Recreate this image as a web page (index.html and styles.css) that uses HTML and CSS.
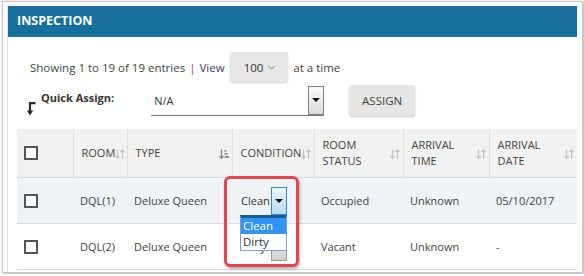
FILE: index.html
```html
<!DOCTYPE html>
<html lang="en">
<head>
    <meta charset="UTF-8">
    <title>Inspection</title>
    <link rel="stylesheet" href="styles.css">
</head>
<body>
    <div class="shot">
        <div class="panel">
            <div class="panel-head">INSPECTION</div>
            <div class="panel-body">
                <div class="paging">
                    <span>Showing 1 to 19 of 19 entries</span>
                    <span class="sep">|</span>
                    <span class="view">View</span>
                    <span class="per-page">100
                        <svg width="7" height="5" viewBox="0 0 7 5"><polyline points="0.5,1 3.5,4 6.5,1" fill="none" stroke="#777" stroke-width="1"/></svg>
                    </span>
                    <span>at a time</span>
                </div>
                <div class="assign">
                    <svg class="assign-arrow" width="9" height="14" viewBox="0 0 9 14">
                        <path d="M8.5 1.2 H3 V9" fill="none" stroke="#2b2b2b" stroke-width="2.2"/>
                        <polygon points="-0.2,8.5 6.2,8.5 3,13.5" fill="#2b2b2b"/>
                    </svg>
                    <span class="assign-label">Quick Assign:</span>
                    <div class="qa-select">
                        <span class="qa-value">N/A</span>
                        <span class="qa-btn"><span class="tri"></span></span>
                    </div>
                    <button class="btn">ASSIGN</button>
                </div>

                <table class="grid">
                    <colgroup>
                        <col style="width:56px"><col style="width:54px"><col style="width:105px"><col style="width:82px">
                        <col style="width:89px"><col style="width:86px"><col style="width:88px">
                    </colgroup>
                    <thead>
                        <tr>
                            <th class="chk-cell"><span class="chk"></span></th>
                            <th><div class="th-in"><span>ROOM</span><svg class="sort" width="10" height="10" viewBox="0 0 10 10"><path d="M2.5 0.5 V9 M0.5 7 L2.5 9.2 L4.5 7 M7.5 9.5 V1 M5.5 3 L7.5 0.8 L9.5 3" fill="none" stroke="#c4c4c4" stroke-width="1.2"/></svg></div></th>
                            <th><div class="th-in"><span>TYPE</span><svg class="sort" width="10" height="10" viewBox="0 0 10 10"><path d="M2.5 0.5 V9 M0.5 7 L2.5 9.2 L4.5 7" fill="none" stroke="#888" stroke-width="1.4"/><rect x="5.5" y="1" width="2" height="1.6" fill="#888"/><rect x="5.5" y="4" width="3" height="1.6" fill="#888"/><rect x="5.5" y="7" width="4.5" height="1.8" fill="#888"/></svg></div></th>
                            <th><div class="th-in"><span>CONDITION</span><svg class="sort" width="10" height="10" viewBox="0 0 10 10"><path d="M2.5 0.5 V9 M0.5 7 L2.5 9.2 L4.5 7 M7.5 9.5 V1 M5.5 3 L7.5 0.8 L9.5 3" fill="none" stroke="#c4c4c4" stroke-width="1.2"/></svg></div></th>
                            <th><div class="th-in"><span>ROOM<br>STATUS</span><svg class="sort" width="10" height="10" viewBox="0 0 10 10"><path d="M2.5 0.5 V9 M0.5 7 L2.5 9.2 L4.5 7 M7.5 9.5 V1 M5.5 3 L7.5 0.8 L9.5 3" fill="none" stroke="#c4c4c4" stroke-width="1.2"/></svg></div></th>
                            <th><div class="th-in"><span>ARRIVAL<br>TIME</span><svg class="sort" width="10" height="10" viewBox="0 0 10 10"><path d="M2.5 0.5 V9 M0.5 7 L2.5 9.2 L4.5 7 M7.5 9.5 V1 M5.5 3 L7.5 0.8 L9.5 3" fill="none" stroke="#c4c4c4" stroke-width="1.2"/></svg></div></th>
                            <th><div class="th-in"><span>ARRIVAL<br>DATE</span><svg class="sort" width="10" height="10" viewBox="0 0 10 10"><path d="M2.5 0.5 V9 M0.5 7 L2.5 9.2 L4.5 7 M7.5 9.5 V1 M5.5 3 L7.5 0.8 L9.5 3" fill="none" stroke="#c4c4c4" stroke-width="1.2"/></svg></div></th>
                        </tr>
                    </thead>
                    <tbody>
                        <tr class="row-hi">
                            <td class="chk-cell"><span class="chk"></span></td>
                            <td>DQL(1)</td>
                            <td>Deluxe Queen</td>
                            <td>
                                <div class="cond-select open">
                                    <span class="cond-value">Clean</span>
                                    <span class="cond-btn"><span class="tri"></span></span>
                                    <ul class="cond-list">
                                        <li class="picked">Clean</li>
                                        <li>Dirty</li>
                                    </ul>
                                </div>
                            </td>
                            <td>Occupied</td>
                            <td>Unknown</td>
                            <td>05/10/2017</td>
                        </tr>
                        <tr>
                            <td class="chk-cell"><span class="chk"></span></td>
                            <td>DQL(2)</td>
                            <td>Deluxe Queen</td>
                            <td>
                                <div class="cond-select">
                                    <span class="cond-value">Dirty</span>
                                    <span class="cond-btn"><span class="tri"></span></span>
                                </div>
                            </td>
                            <td>Vacant</td>
                            <td>Unknown</td>
                            <td>-</td>
                        </tr>
                    </tbody>
                </table>
            </div>
        </div>
        <div class="callout"></div>
    </div>
</body>
</html>
```

FILE: styles.css
```css
body {
    margin: 0;
    background: #fff;
    font-family: "Open Sans", "Liberation Sans", sans-serif;
    color: #444;
}

.shot {
    position: relative;
    margin: 1px 2px;
    width: 579px;
    height: 270px;
    border: 1px solid #c9c9c9;
    box-shadow: 1px 1px 3px rgba(0, 0, 0, 0.35);
    overflow: hidden;
    background: #fff;
}

.panel {
    margin: 4px 0 0 4px;
    width: 569px;
    border-left: 1px solid #e2e2e2;
    height: 300px;
}

.panel-head {
    height: 31px;
    background: #16709b;
    color: #fff;
    font-weight: bold;
    font-size: 12.5px;
    line-height: 30px;
    padding-left: 9px;
}

.paging {
    display: flex;
    align-items: center;
    height: 30px;
    margin-top: 15px;
    padding-left: 22px;
    font-size: 11.5px;
    color: #444;
}

.sep {
    color: #a0405a;
    margin: 0 4px;
}

.view {
    color: #3c3a70;
}

.per-page {
    display: inline-flex;
    align-items: center;
    gap: 5px;
    height: 30px;
    margin: 0 5px 0 5px;
    padding: 0 13px 0 14px;
    background: #e7e7e7;
    border-radius: 3px;
    box-shadow: 0 1px 2px rgba(0, 0, 0, 0.18);
    color: #333;
}

.assign {
    display: flex;
    align-items: center;
    height: 31px;
    margin-top: 3px;
    padding-left: 19px;
    font-size: 11px;
}

.assign-arrow {
    align-self: flex-end;
}

.assign-label {
    font-weight: bold;
    color: #333;
    margin-left: 5px;
    margin-top: -6px;
}

.qa-select {
    display: flex;
    justify-content: space-between;
    width: 173px;
    height: 30px;
    margin-left: 37px;
    border-bottom: 1px solid #7a7a7a;
    box-sizing: border-box;
}

.qa-value {
    padding: 7px 0 0 3px;
    color: #333;
}

.qa-btn {
    display: flex;
    align-items: center;
    justify-content: center;
    width: 16px;
    height: 29px;
    box-sizing: border-box;
    border: 1px solid #808080;
    background: linear-gradient(#fbfbfb, #dcdcdc);
}

.tri {
    width: 0;
    height: 0;
    border-left: 4px solid transparent;
    border-right: 4px solid transparent;
    border-top: 4px solid #111;
}

.btn {
    margin-left: 25px;
    width: 66px;
    height: 31px;
    border: none;
    border-radius: 3px;
    background: #e6e6e6;
    box-shadow: 0 1px 2px rgba(0, 0, 0, 0.2);
    font-family: inherit;
    font-size: 11.5px;
    color: #444;
    padding: 0;
}

.grid {
    margin: 13px 0 0 9px;
    width: 560px;
    table-layout: fixed;
    border-collapse: collapse;
    font-size: 11px;
}

.grid th {
    height: 48px;
    background: #f2f2f2;
    font-weight: normal;
    text-align: left;
    color: #444;
    padding: 0 3px 0 8px;
    border-left: 1px solid #e0e0e0;
    border-bottom: 1px solid #dcdcdc;
    line-height: 16px;
}

.grid th:first-child {
    border-left: none;
}

.th-in {
    display: flex;
    align-items: center;
    justify-content: space-between;
    white-space: nowrap;
}

.sort {
    flex-shrink: 0;
    margin-top: 1px;
}

.grid td {
    height: 45px;
    padding: 0 0 0 7px;
    border-bottom: 1px solid #dcdcdc;
    color: #444;
    white-space: nowrap;
}

.grid .chk-cell {
    padding-left: 7px;
}

.row-hi td {
    background: #eef3f7;
}

.chk {
    display: block;
    width: 14px;
    height: 14px;
    box-sizing: border-box;
    border: 2px solid #555;
    background: #fff;
}

.cond-select {
    position: relative;
    display: flex;
    align-items: center;
    width: 46px;
    margin-left: 2px;
    justify-content: space-between;
}

.cond-value {
    color: #333;
}

.cond-btn {
    display: flex;
    align-items: center;
    justify-content: center;
    width: 16px;
    height: 28px;
    box-sizing: border-box;
    border: 1px solid #999;
    background: linear-gradient(#f4f4f4, #cfcfcf);
}

.open .cond-btn {
    border-color: #3f86c8;
    background: linear-gradient(#eaf6fd, #b6dcf3);
}

.cond-list {
    position: absolute;
    top: 100%;
    left: -1px;
    width: 47px;
    margin: 0;
    padding: 0;
    list-style: none;
    background: #fff;
    border: 1px solid #7d9fd6;
    border-top: 3px solid #1b5c9b;
    box-sizing: border-box;
    z-index: 2;
    font-size: 11.5px;
}

.cond-list li {
    height: 16px;
    line-height: 16px;
    padding-left: 2px;
    color: #333;
}

.cond-list li.picked {
    background: #3294f5;
    color: #fff;
}

.callout {
    position: absolute;
    left: 221px;
    top: 174px;
    width: 75px;
    height: 91px;
    box-sizing: border-box;
    border: 3px solid #e4454e;
    border-radius: 6px;
    box-shadow: 1px 2px 3px rgba(0, 0, 0, 0.3);
    z-index: 3;
}
```
